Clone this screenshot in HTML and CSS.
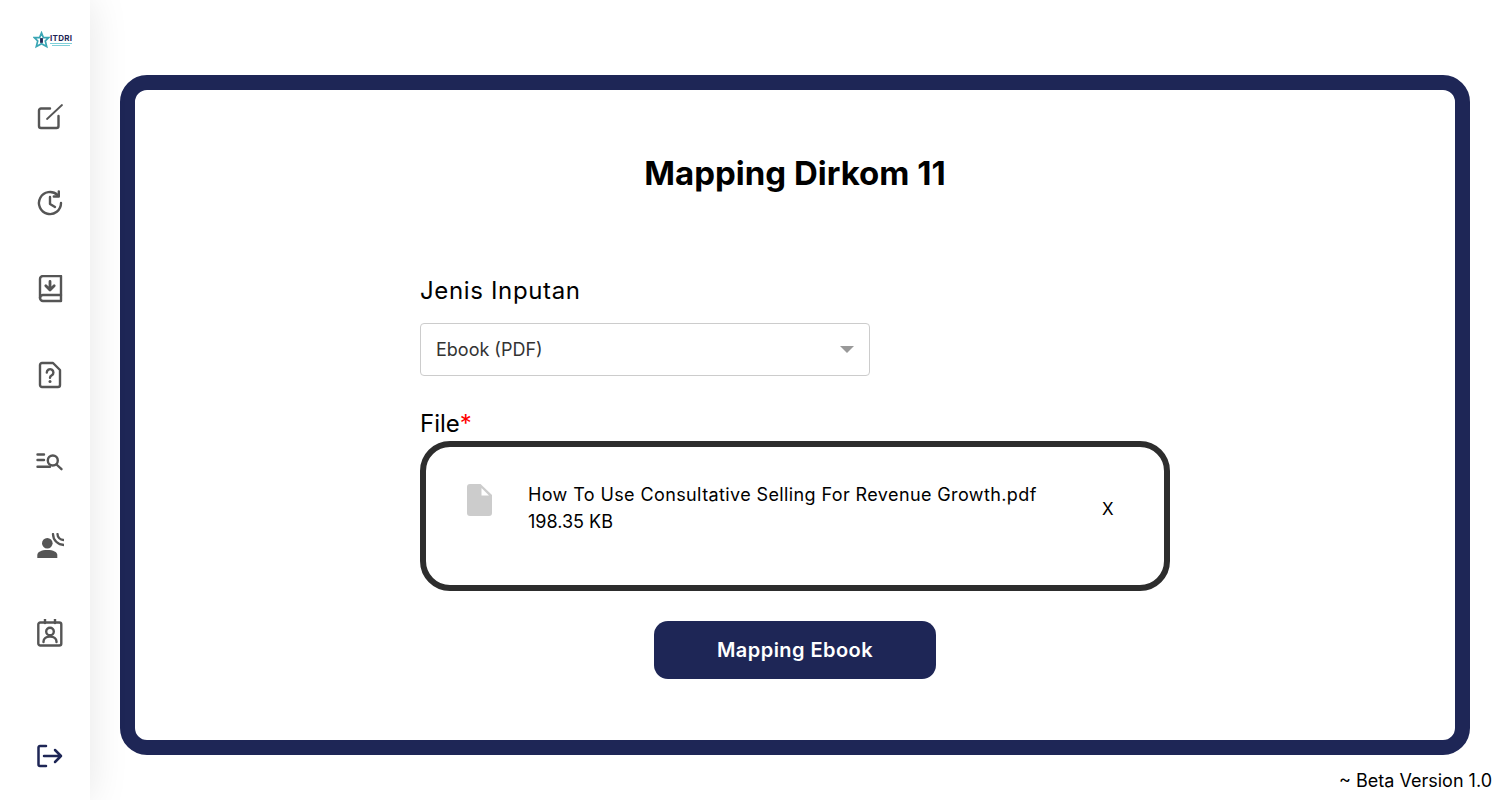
FILE: index.html
```html
<!DOCTYPE html>
<html lang="id">
<head>
<meta charset="utf-8">
<title>Mapping Dirkom 11</title>
<link rel="stylesheet" href="styles.css">
</head>
<body>
<div class="app">
  <aside class="sidebar">
    <div class="logo">
      <svg class="logo-star" viewBox="0 0 18 18"><path d="M9 1.500l2 5h5.500l-3.500 3.500 1.500 6-5.500-3-5.500 3 1.500-6L1.500 6.500H7z" fill="none" stroke="#3aa6b5" stroke-width="1.800"/><rect x="7.500" y="7" width="3" height="5" fill="#1e2656"/></svg>
      <div class="logo-words">
        <span class="logo-name">ITDRI</span>
        <span class="logo-line"></span>
        <span class="logo-line short"></span>
      </div>
    </div>
    <nav class="nav">
      <a class="nav-item"><svg class="icon" viewBox="0 0 28 28"><path d="M14 5.500H5a2 2 0 0 0-2 2V23a2 2 0 0 0 2 2h15.500a2 2 0 0 0 2-2V13"/><path class="thin" d="M11 16L26 2"/></svg></a>
      <a class="nav-item"><svg class="icon" viewBox="0 0 28 28"><path d="M25 14A11 11 0 1 1 21.500 6"/><path d="M22.800 2.500V7.500H17.800"/><path d="M14 8v7l5 3"/></svg></a>
      <a class="nav-item"><svg class="icon" viewBox="0 0 28 28"><path d="M25 1H7a3 3 0 0 0-3 3v19a3 3 0 0 0 3 3h18V1z"/><path d="M4 23a3 3 0 0 1 3-3h18"/><path class="bold" d="M14 6.500v8M9.800 10.800L14 15l4.200-4.200"/></svg></a>
      <a class="nav-item"><svg class="icon" viewBox="0 0 28 28"><path d="M6 2h11l7 7v15a2 2 0 0 1-2 2H6a2 2 0 0 1-2-2V4a2 2 0 0 1 2-2z"/><path d="M10.800 11.500a3.300 3.300 0 1 1 5 2.800c-1 .6-1.800 1.200-1.800 2.400"/><circle class="solid" cx="14" cy="20.500" r="1.500"/></svg></a>
      <a class="nav-item"><svg class="icon" viewBox="0 0 28 28"><path d="M1.500 7.500H8M1.500 13H8M1.500 19.800H14"/><circle cx="16.800" cy="13.500" r="5"/><path d="M20.500 17.500l5 4.700"/></svg></a>
      <a class="nav-item"><svg class="icon" viewBox="0 0 28 28"><circle class="solid" cx="11.300" cy="10.300" r="5.300"/><path class="solid" d="M1.300 25v-3c0-3 4-5 10-5s10 2 10 5v3z"/><path class="wave" d="M17 1a11 11 0 0 0 11 11"/><path class="wave" d="M21.500 1a6 6 0 0 0 6 6"/></svg></a>
      <a class="nav-item"><svg class="icon" viewBox="0 0 28 28"><rect x="2.300" y="3.500" width="23" height="23" rx="2"/><path d="M9 0v4M19 0v4"/><circle cx="14" cy="12.500" r="3.800"/><path d="M7.500 23v-.5c0-3 2.800-5 6.500-5s6.500 2 6.500 5v.5"/></svg></a>
    </nav>
    <a class="logout"><svg class="icon navy" viewBox="0 0 28 28"><path d="M10 4H4a1.500 1.500 0 0 0-1.500 1.500v17A1.500 1.500 0 0 0 4 24h6"/><path d="M8 14h17M19 8l6 6-6 6"/></svg></a>
  </aside>
  <main class="main">
    <section class="card">
      <h1 class="title">Mapping Dirkom 11</h1>
      <form class="form">
        <label class="label">Jenis Inputan</label>
        <div class="select">
          <span class="select-value">Ebook (PDF)</span>
          <span class="select-arrow"></span>
        </div>
        <label class="label label-file">File<span class="req">*</span></label>
        <div class="dropzone">
          <svg class="file-icon" viewBox="0 0 25 32"><path d="M3 0h10.500L25 11v18a3 3 0 0 1-3 3H3a3 3 0 0 1-3-3V3a3 3 0 0 1 3-3z" fill="#ccc"/><path d="M14.500 4l7.500 7.500h-7.500z" fill="#fff"/></svg>
          <div class="file-info">
            <div>How To Use Consultative Selling For Revenue Growth.pdf</div>
            <div class="file-size">198.35 KB</div>
          </div>
          <span class="file-remove">X</span>
        </div>
        <button class="submit" type="button">Mapping Ebook</button>
      </form>
    </section>
    <div class="version">~ Beta Version 1.0</div>
  </main>
</div>
</body>
</html>
```

FILE: styles.css
```css
* { box-sizing: border-box; }
html, body { margin: 0; height: 100%; }
body {
  font-family: Inter, "Open Sans", "Liberation Sans", sans-serif;
  color: #000;
  background: #fff;
}
.app { display: flex; height: 800px; overflow: hidden; }

.sidebar {
  width: 90px;
  flex: none;
  display: flex;
  flex-direction: column;
  background: #fff;
  box-shadow: 0 0 40px rgba(0, 0, 0, 0.1);
  padding-left: 36px;
  position: relative;
}
.logo {
  height: 30px;
  margin-top: 25px;
  margin-left: -3px;
  display: flex;
  align-items: center;
}
.logo-star { width: 17px; height: 18px; flex: none; }
.logo-words { display: flex; flex-direction: column; align-items: flex-start; gap: 1px; }
.logo-name { font-size: 8px; line-height: 8px; font-weight: 700; color: #1e2656; letter-spacing: 0.3px; }
.logo-line { width: 22px; height: 1px; background: #7fcfd8; }
.logo-line.short { width: 18px; margin-left: 2px; }

.nav { display: flex; flex-direction: column; margin-top: 19px; }
.nav-item { height: 86px; display: flex; align-items: center; }
.icon {
  width: 28px;
  height: 28px;
  display: block;
  fill: none;
  stroke: #555;
  stroke-width: 2.4;
  stroke-linecap: round;
  stroke-linejoin: round;
}
.icon .thin { stroke-width: 1.8; }
.icon .wave { stroke-width: 2.3; }
.icon .bold { stroke-width: 2.8; }
.icon .solid { fill: #555; stroke: none; }
.icon.navy { stroke: #1e2656; stroke-width: 2.5; }
.logout { margin-top: auto; margin-bottom: 30px; }

.main { flex: 1; min-width: 0; padding: 75px 30px 0; display: flex; flex-direction: column; }
.card {
  height: 680px;
  border: 15px solid #1e2656;
  border-radius: 27px;
  background: #fff;
  display: flex;
  flex-direction: column;
  align-items: center;
  padding-top: 61px;
}
.title { margin: 0; font-size: 33px; line-height: 44px; font-weight: 700; text-align: center; }
.form { width: 750px; margin-top: 81px; display: flex; flex-direction: column; }
.label { font-size: 24px; line-height: 30px; letter-spacing: 0.65px; }
.select {
  width: 450px;
  height: 53px;
  margin-top: 17px;
  border: 1px solid #ccc;
  border-radius: 4px;
  display: flex;
  align-items: center;
  justify-content: space-between;
  padding: 0 15px;
}
.select-value { font-size: 18px; color: #333; }
.select-arrow {
  width: 0;
  height: 0;
  border-left: 7px solid transparent;
  border-right: 7px solid transparent;
  border-top: 7px solid #999;
}
.label-file { margin-top: 33px; letter-spacing: 0; }
.req { color: #f00; }
.dropzone {
  height: 150px;
  margin-top: 2px;
  border: 6px solid #2d2d2d;
  border-radius: 30px;
  display: flex;
  align-items: flex-start;
  padding: 37px 0 0 41px;
}
.file-icon { width: 25px; height: 32px; flex: none; }
.file-info { margin-left: 36px; margin-top: -3px; width: 574px; font-size: 18px; line-height: 27px; letter-spacing: 0.39px; }
.file-size { letter-spacing: 0; }
.file-remove { font-size: 17px; line-height: 27px; margin-top: 12px; }
.submit {
  align-self: center;
  width: 282px;
  height: 58px;
  margin-top: 30px;
  border: 0;
  border-radius: 14px;
  background: #1e2656;
  color: #fff;
  font-family: inherit;
  font-size: 20px;
  letter-spacing: 0.45px;
  font-weight: 600;
}
.version { margin-top: 15px; text-align: right; font-size: 18px; line-height: 22px; margin-right: -22px; }
```
